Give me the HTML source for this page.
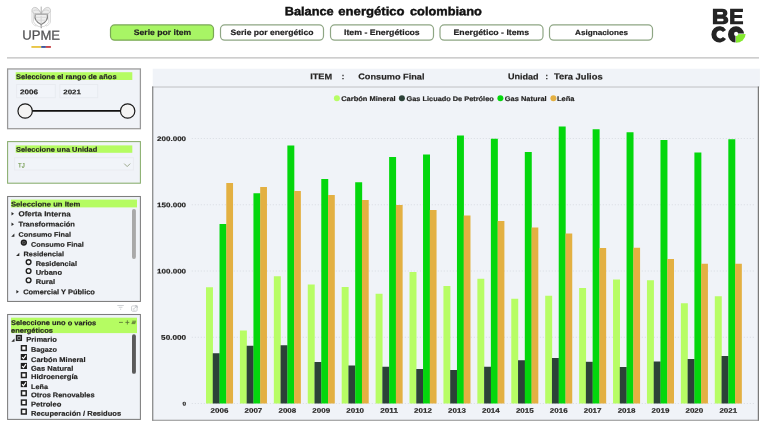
<!DOCTYPE html>
<html><head><meta charset="utf-8"><title>Balance energético colombiano</title>
<style>
html,body{margin:0;padding:0;background:#fff;}
body{width:768px;height:428px;position:relative;overflow:hidden;font-family:"Liberation Sans",sans-serif;}
.t{position:absolute;left:0;top:0;white-space:pre;transform-origin:0 0;-webkit-text-stroke:0.18px currentColor;font-family:"Liberation Sans",sans-serif;}
.box{position:absolute;box-sizing:border-box;}
.btn{position:absolute;top:24.4px;height:16.3px;box-sizing:border-box;border:1px solid #8aa67a;border-radius:4.5px;background:#fff;}
.btn.on{background:#a8f565;border-color:#7aa855;}
.hl{fill:#b5fc62;}
.ttl{-webkit-text-stroke:0.42px #111;}
.tj{-webkit-text-stroke:0.15px #6d9646;}
.upme{-webkit-text-stroke:0.25px #4e4e50;}
#txt{position:absolute;left:0;top:0;width:768px;height:428px;will-change:transform;}
svg{position:absolute;left:0;top:0;}
</style></head><body>
<svg width="768" height="428" viewBox="0 0 768 428">
<!-- header rule + buttons -->
<rect x="7" y="57.1" width="752" height="1.5" fill="#c9c9c9"/>
<rect x="110.5" y="24.9" width="103" height="15.3" rx="4.2" fill="#a8f565" stroke="#7aa855" stroke-width="1.2"/><rect x="220.5" y="24.9" width="103" height="15.3" rx="4.2" fill="#fff" stroke="#8ea684" stroke-width="1.2"/><rect x="330.5" y="24.9" width="103" height="15.3" rx="4.2" fill="#fff" stroke="#8ea684" stroke-width="1.2"/><rect x="440.0" y="24.9" width="103.0" height="15.3" rx="4.2" fill="#fff" stroke="#8ea684" stroke-width="1.2"/><rect x="549.5" y="24.9" width="103" height="15.3" rx="4.2" fill="#fff" stroke="#8ea684" stroke-width="1.2"/>
<!-- left panels -->
<rect x="7.6" y="68.95" width="132.8" height="59.749999999999986" fill="#f0f3f8" stroke="#999" stroke-width="1.25"/>
<rect class="hl" x="15.7" y="72.2" width="116.6" height="7.8"/>
<rect x="16.6" y="84.5" width="38.7" height="13.2" fill="#f1f4f9" stroke="#e8ebf0" stroke-width="1"/>
<rect x="59.8" y="84.5" width="37.9" height="13.2" fill="#f1f4f9" stroke="#e8ebf0" stroke-width="1"/>
<rect x="7.6" y="141.6" width="132.8" height="41.599999999999994" fill="#f0f3f8" stroke="#88ad6c" stroke-width="1.05"/>
<rect class="hl" x="15.7" y="145.4" width="116.6" height="7.4"/>
<rect x="14.6" y="157.7" width="118.8" height="12.3" fill="#f1f4f9" stroke="#e9ecf0" stroke-width="1"/>
<rect x="7.6" y="196.5" width="132.8" height="104.94999999999999" fill="#f0f3f8" stroke="#7d7d7d" stroke-width="1.05"/>
<rect class="hl" x="11" y="199.6" width="126" height="7.8"/>
<rect x="132" y="208.9" width="3.9" height="50" rx="1.9" fill="#a9a9a9"/>
<rect x="7.6" y="314.5" width="132.8" height="104.89999999999998" fill="#f0f3f8" stroke="#7d7d7d" stroke-width="1.05"/>
<rect class="hl" x="11" y="317.7" width="126" height="15.4"/>
<rect x="132" y="334.3" width="3.9" height="39.5" rx="1.9" fill="#5a5a5a"/>
<!-- chart -->
<rect x="152.7" y="68.7" width="607.2" height="18" fill="#f0f3f8"/>
<rect x="152.7" y="86.9" width="605.7" height="333.3" fill="#f0f3f8"/>
<line x1="152" x2="759.2" y1="87" y2="87" stroke="#cfd1d4" stroke-width="1.3"/>
<line x1="152.75" x2="152.75" y1="86.4" y2="420.75" stroke="#777" stroke-width="1.1"/>
<line x1="758.35" x2="758.35" y1="86.4" y2="420.75" stroke="#6a6a6a" stroke-width="1.1"/>
<line x1="152.2" x2="758.9" y1="420.2" y2="420.2" stroke="#8e8e8e" stroke-width="1.15"/>
<line x1="191.8" x2="754" y1="403.50" y2="403.50" stroke="#d8dce2" stroke-width="1" stroke-dasharray="1 2"/><line x1="191.8" x2="754" y1="337.25" y2="337.25" stroke="#d8dce2" stroke-width="1" stroke-dasharray="1 2"/><line x1="191.8" x2="754" y1="271.00" y2="271.00" stroke="#d8dce2" stroke-width="1" stroke-dasharray="1 2"/><line x1="191.8" x2="754" y1="204.75" y2="204.75" stroke="#d8dce2" stroke-width="1" stroke-dasharray="1 2"/><line x1="191.8" x2="754" y1="138.50" y2="138.50" stroke="#d8dce2" stroke-width="1" stroke-dasharray="1 2"/>
<rect x="206.00" y="287.25" width="6.96" height="116.25" fill="#b7fd65"/><rect x="212.76" y="353.25" width="6.96" height="50.25" fill="#2c4238"/><rect x="219.52" y="224.00" width="6.96" height="179.50" fill="#04d70d"/><rect x="226.28" y="183.00" width="6.76" height="220.50" fill="#e3b042"/><rect x="239.92" y="330.50" width="6.96" height="73.00" fill="#b7fd65"/><rect x="246.68" y="345.75" width="6.96" height="57.75" fill="#2c4238"/><rect x="253.44" y="193.25" width="6.96" height="210.25" fill="#04d70d"/><rect x="260.20" y="187.00" width="6.76" height="216.50" fill="#e3b042"/><rect x="273.84" y="276.25" width="6.96" height="127.25" fill="#b7fd65"/><rect x="280.60" y="345.25" width="6.96" height="58.25" fill="#2c4238"/><rect x="287.36" y="145.50" width="6.96" height="258.00" fill="#04d70d"/><rect x="294.12" y="191.00" width="6.76" height="212.50" fill="#e3b042"/><rect x="307.76" y="284.50" width="6.96" height="119.00" fill="#b7fd65"/><rect x="314.52" y="362.00" width="6.96" height="41.50" fill="#2c4238"/><rect x="321.28" y="179.00" width="6.96" height="224.50" fill="#04d70d"/><rect x="328.04" y="195.00" width="6.76" height="208.50" fill="#e3b042"/><rect x="341.68" y="287.00" width="6.96" height="116.50" fill="#b7fd65"/><rect x="348.44" y="365.50" width="6.96" height="38.00" fill="#2c4238"/><rect x="355.20" y="182.25" width="6.96" height="221.25" fill="#04d70d"/><rect x="361.96" y="200.00" width="6.76" height="203.50" fill="#e3b042"/><rect x="375.60" y="293.75" width="6.96" height="109.75" fill="#b7fd65"/><rect x="382.36" y="366.75" width="6.96" height="36.75" fill="#2c4238"/><rect x="389.12" y="157.00" width="6.96" height="246.50" fill="#04d70d"/><rect x="395.88" y="205.00" width="6.76" height="198.50" fill="#e3b042"/><rect x="409.52" y="272.00" width="6.96" height="131.50" fill="#b7fd65"/><rect x="416.28" y="369.00" width="6.96" height="34.50" fill="#2c4238"/><rect x="423.04" y="154.50" width="6.96" height="249.00" fill="#04d70d"/><rect x="429.80" y="210.00" width="6.76" height="193.50" fill="#e3b042"/><rect x="443.44" y="286.00" width="6.96" height="117.50" fill="#b7fd65"/><rect x="450.20" y="370.00" width="6.96" height="33.50" fill="#2c4238"/><rect x="456.96" y="135.50" width="6.96" height="268.00" fill="#04d70d"/><rect x="463.72" y="215.50" width="6.76" height="188.00" fill="#e3b042"/><rect x="477.36" y="278.75" width="6.96" height="124.75" fill="#b7fd65"/><rect x="484.12" y="366.75" width="6.96" height="36.75" fill="#2c4238"/><rect x="490.88" y="138.75" width="6.96" height="264.75" fill="#04d70d"/><rect x="497.64" y="221.00" width="6.76" height="182.50" fill="#e3b042"/><rect x="511.28" y="298.75" width="6.96" height="104.75" fill="#b7fd65"/><rect x="518.04" y="360.25" width="6.96" height="43.25" fill="#2c4238"/><rect x="524.80" y="152.00" width="6.96" height="251.50" fill="#04d70d"/><rect x="531.56" y="227.50" width="6.76" height="176.00" fill="#e3b042"/><rect x="545.20" y="295.75" width="6.96" height="107.75" fill="#b7fd65"/><rect x="551.96" y="358.00" width="6.96" height="45.50" fill="#2c4238"/><rect x="558.72" y="126.50" width="6.96" height="277.00" fill="#04d70d"/><rect x="565.48" y="233.50" width="6.76" height="170.00" fill="#e3b042"/><rect x="579.12" y="288.00" width="6.96" height="115.50" fill="#b7fd65"/><rect x="585.88" y="361.80" width="6.96" height="41.70" fill="#2c4238"/><rect x="592.64" y="129.25" width="6.96" height="274.25" fill="#04d70d"/><rect x="599.40" y="248.00" width="6.76" height="155.50" fill="#e3b042"/><rect x="613.04" y="279.50" width="6.96" height="124.00" fill="#b7fd65"/><rect x="619.80" y="367.00" width="6.96" height="36.50" fill="#2c4238"/><rect x="626.56" y="132.25" width="6.96" height="271.25" fill="#04d70d"/><rect x="633.32" y="247.75" width="6.76" height="155.75" fill="#e3b042"/><rect x="646.96" y="280.25" width="6.96" height="123.25" fill="#b7fd65"/><rect x="653.72" y="361.50" width="6.96" height="42.00" fill="#2c4238"/><rect x="660.48" y="140.00" width="6.96" height="263.50" fill="#04d70d"/><rect x="667.24" y="259.00" width="6.76" height="144.50" fill="#e3b042"/><rect x="680.88" y="303.25" width="6.96" height="100.25" fill="#b7fd65"/><rect x="687.64" y="359.00" width="6.96" height="44.50" fill="#2c4238"/><rect x="694.40" y="152.50" width="6.96" height="251.00" fill="#04d70d"/><rect x="701.16" y="263.75" width="6.76" height="139.75" fill="#e3b042"/><rect x="714.80" y="296.25" width="6.96" height="107.25" fill="#b7fd65"/><rect x="721.56" y="356.00" width="6.96" height="47.50" fill="#2c4238"/><rect x="728.32" y="139.25" width="6.96" height="264.25" fill="#04d70d"/><rect x="735.08" y="263.75" width="6.76" height="139.75" fill="#e3b042"/>
<circle cx="336.9" cy="98.3" r="3" fill="#b7fd65"/><circle cx="401.9" cy="98.3" r="3" fill="#2c4238"/><circle cx="500.4" cy="98.3" r="3" fill="#04d70d"/><circle cx="553.4" cy="98.3" r="3" fill="#e3b042"/>
<path d="M11.5 211.90 L14.0 213.7 L11.5 215.50Z" fill="#2a2a2a"/><path d="M11.5 222.40 L14.0 224.2 L11.5 226.00Z" fill="#2a2a2a"/><path d="M14.399999999999999 233.60 L14.399999999999999 236.8 L11.2 236.8Z" fill="#2a2a2a"/><circle cx="23.85" cy="242.6" r="2.4" fill="#9a9a9a" stroke="#1e1e1e" stroke-width="1.5"/><circle cx="23.85" cy="242.6" r="1.35" fill="#333"/><path d="M19.3 252.70 L19.3 255.9 L16.1 255.9Z" fill="#2a2a2a"/><circle cx="28.6" cy="262.1" r="2.4" fill="#f6f6f6" stroke="#1e1e1e" stroke-width="1.35"/><circle cx="28.6" cy="271" r="2.4" fill="#f6f6f6" stroke="#1e1e1e" stroke-width="1.35"/><circle cx="28.6" cy="280.2" r="2.4" fill="#f6f6f6" stroke="#1e1e1e" stroke-width="1.35"/><path d="M16.4 289.90 L18.9 291.7 L16.4 293.50Z" fill="#2a2a2a"/><path d="M14.5 338.60 L14.5 341.8 L11.3 341.8Z" fill="#2a2a2a"/><rect x="16.60" y="335.60" width="4.7" height="4.7" fill="#d3d5d8" stroke="#222" stroke-width="1.5"/><rect x="17.70" y="337.30" width="2.6" height="1.5" fill="#111"/><rect x="21.50" y="345.75" width="4.7" height="4.7" fill="#fbfbfb" stroke="#222" stroke-width="1.5"/><rect x="20.75" y="354.00" width="6.2" height="6.1" fill="#1c1c1c"/><path d="M22.05 357.20 L23.45 358.70 L25.95 355.30" fill="none" stroke="#fff" stroke-width="1.15"/><rect x="20.75" y="362.90" width="6.2" height="6.1" fill="#1c1c1c"/><path d="M22.05 366.10 L23.45 367.60 L25.95 364.20" fill="none" stroke="#fff" stroke-width="1.15"/><rect x="21.50" y="372.80" width="4.7" height="4.7" fill="#fbfbfb" stroke="#222" stroke-width="1.5"/><rect x="20.75" y="381.05" width="6.2" height="6.1" fill="#1c1c1c"/><path d="M22.05 384.25 L23.45 385.75 L25.95 382.35" fill="none" stroke="#fff" stroke-width="1.15"/><rect x="21.50" y="390.85" width="4.7" height="4.7" fill="#fbfbfb" stroke="#222" stroke-width="1.5"/><rect x="21.50" y="400.10" width="4.7" height="4.7" fill="#fbfbfb" stroke="#222" stroke-width="1.5"/><rect x="21.50" y="409.30" width="4.7" height="4.7" fill="#fbfbfb" stroke="#222" stroke-width="1.5"/><line x1="25" x2="127.6" y1="110.8" y2="110.8" stroke="#111" stroke-width="1.8"/><circle cx="25.15" cy="111" r="7.2" fill="#f4f4f4" stroke="#1a1a1a" stroke-width="1.2"/><circle cx="127.65" cy="111" r="7.2" fill="#f4f4f4" stroke="#1a1a1a" stroke-width="1.2"/><path d="M124.2 163.6 L127.2 166.6 L130.2 163.6" fill="none" stroke="#98a487" stroke-width="0.95"/><g stroke="#c3c6ca" stroke-width="0.8" fill="none"><path d="M117.300 305.500h6.500M118.800 307.300h3.600M120 309.200h1.200"/><rect x="131.500" y="305.900" width="5.600" height="5.400" rx="1.200"/><path d="M134 308.800l2.600-2.600M135 305.800h2.200v2.200" stroke="#b4b7bc"/><path d="M133.300 308.200v2h2.200" stroke="#d0d3d7"/></g><g stroke="#5b7636" stroke-width="0.85" fill="none"><path d="M119 322.4h3.900M125.400 322.400h3.900M127.350 320.300v4.200"/><path d="M132.300 321.200h3.800M131.900 322.400h3.800M131.500 323.600h3.800" stroke-width="0.9"/></g>
<!-- UPME crest -->
<defs><filter id="sb" x="-20%" y="-20%" width="140%" height="140%"><feGaussianBlur stdDeviation="0.4"/></filter></defs>
<g filter="url(#sb)" fill="none" stroke-linecap="round">
<path d="M32 11.500V22C32.600 24 34 25.400 36 26M50.400 11.500V22C49.800 24 48.400 25.400 46.400 26" stroke="#d9d9d9" stroke-width="1"/>
<path d="M33.600 12.500V21.500C34.200 23.400 35.400 24.600 37 25.400M48.800 12.500V21.500C48.200 23.400 47 24.600 45.400 25.400" stroke="#cfcfcf" stroke-width="0.8"/>
<path d="M40.900 13.600C39.600 8.600 35 5.800 32.600 8.400C31.200 10.200 32 12.600 34.400 13.600C36.500 14.300 39.400 14.100 40.900 13.600zM41.500 13.600C42.800 8.600 47.400 5.800 49.800 8.400C51.200 10.200 50.400 12.600 48 13.600C45.900 14.300 43 14.100 41.500 13.600z" fill="#ececec" stroke="#bdbdbd" stroke-width="0.8"/>
<path d="M33.600 10.800c2.200-1.600 5-1 6.800 1.400M48.800 10.800c-2.200-1.600-5-1-6.800 1.400" stroke="#c9c9c9" stroke-width="0.7"/>
<path d="M35.200 14.400C34.300 18 35.300 21.800 41.200 24.600C47.100 21.800 48.100 18 47.200 14.400Z" fill="#efefef" stroke="#868686" stroke-width="1.15"/>
<path d="M35.400 14.300H47" stroke="#bdbdbd" stroke-width="1"/>
<path d="M36 17.300H46.400M36.800 20.200H45.600" stroke="#d0d0d0" stroke-width="0.7"/>
<path d="M41.200 16.500V22.500" stroke="#dadada" stroke-width="1.4"/>
<path d="M41.200 7V13.800" stroke="#adadad" stroke-width="1"/>
<path d="M41.200 24.600V27.700" stroke="#959595" stroke-width="1.2"/>
<path d="M37 25.600C38.400 26.800 40 27 41.200 26.200M45.400 25.600C44 26.800 42.400 27 41.200 26.200" stroke="#c9c9c9" stroke-width="0.7"/>
</g>
<rect x="31.4" y="46" width="9.8" height="1.9" fill="#e9c646"/><rect x="41.2" y="46" width="4.7" height="1.9" fill="#3f5a9c"/><rect x="45.9" y="46" width="5" height="1.9" fill="#c8474c"/>
<!-- BECO -->
<g fill="#242424">
<path fill-rule="evenodd" d="M712.900 8.850h9.200c3.300 0 5.300 1.600 5.300 4.100c0 1.500-0.700 2.600-2 3.300c1.800 0.600 2.900 2 2.900 3.900c0 2.700-2.200 4.100-5.800 4.100h-9.600zM717.200 12v2.600h4.200c1.100 0 1.700-0.500 1.700-1.300c0-0.800-0.600-1.300-1.700-1.300zM717.200 18.700v2.600h4.600c1.200 0 1.800-0.500 1.800-1.300c0-0.800-0.600-1.300-1.800-1.300z"/>
<path d="M730.100 8.850h12.850v3.100h-8.500v2.950h7.650v3.100h-7.650v3.150h8.600v3.100h-12.950z"/>
<path d="M726.03 29.89 A8.0 8.15 0 1 0 726.03 39.01 L722.93 36.99 A3.7 3.95 0 1 1 722.93 31.91 Z"/>
<path d="M736.100 26.300A8.050 8.150 0 0 1 744.100 33.600L735.500 33.600L735.500 42.580A8.050 8.150 0 0 1 736.100 26.300z"/>
</g>
<path d="M736 34.250L745.600 33.950A9.650 8.800 0 0 1 736 42.750z" fill="#84e92f"/>
<circle cx="736.100" cy="33.900" r="2.050" fill="#fff"/>
</svg>
<div id="txt"><span class="t ttl" style="font-size:11.90px;line-height:11.90px;color:#111;font-weight:700;transform:translate(284.70px,6.22px) scaleX(1.074) rotate(0.03deg)">Balance</span><span class="t ttl" style="font-size:11.90px;line-height:11.90px;color:#111;font-weight:700;transform:translate(338.30px,6.22px) scaleX(1.103) rotate(0.03deg)">energético</span><span class="t ttl" style="font-size:11.90px;line-height:11.90px;color:#111;font-weight:700;transform:translate(410.00px,6.22px) scaleX(1.077) rotate(0.03deg)">colombiano</span><span class="t upme" style="font-size:13.12px;line-height:13.12px;color:#525254;font-weight:400;transform:translate(22.20px,28.62px) scaleX(1.000) rotate(0.03deg)">UPME</span><span class="t " style="font-size:7.84px;line-height:7.84px;color:#222;font-weight:700;transform:translate(133.80px,29.07px) scaleX(1.100) rotate(0.03deg)">Serie por item</span><span class="t " style="font-size:7.80px;line-height:7.80px;color:#222;font-weight:700;transform:translate(230.50px,29.07px) scaleX(1.100) rotate(0.03deg)">Serie por energético</span><span class="t " style="font-size:7.94px;line-height:7.94px;color:#222;font-weight:700;transform:translate(344.00px,29.07px) scaleX(1.100) rotate(0.03deg)">Item - Energéticos</span><span class="t " style="font-size:7.94px;line-height:7.94px;color:#222;font-weight:700;transform:translate(453.50px,29.07px) scaleX(1.100) rotate(0.03deg)">Energético - Items</span><span class="t " style="font-size:7.41px;line-height:7.41px;color:#222;font-weight:700;transform:translate(575.00px,29.07px) scaleX(1.100) rotate(0.03deg)">Asignaciones</span><span class="t " style="font-size:8.37px;line-height:8.37px;color:#252423;font-weight:700;transform:translate(310.20px,72.37px) scaleX(1.100) rotate(0.03deg)">ITEM</span><span class="t " style="font-size:8.36px;line-height:8.36px;color:#252423;font-weight:700;transform:translate(358.20px,72.37px) scaleX(1.100) rotate(0.03deg)">Consumo Final</span><span class="t " style="font-size:8.26px;line-height:8.26px;color:#252423;font-weight:700;transform:translate(507.90px,73.37px) scaleX(1.100) rotate(0.03deg)">Unidad</span><span class="t " style="font-size:8.52px;line-height:8.52px;color:#252423;font-weight:700;transform:translate(553.90px,72.37px) scaleX(1.100) rotate(0.03deg)">Tera Julios</span><span class="t " style="font-size:8.60px;line-height:8.60px;color:#252423;font-weight:700;transform:translate(341.70px,72.37px) scaleX(0.873) rotate(0.03deg)">:</span><span class="t " style="font-size:8.60px;line-height:8.60px;color:#252423;font-weight:700;transform:translate(545.50px,72.37px) scaleX(0.873) rotate(0.03deg)">:</span><span class="t " style="font-size:6.81px;line-height:6.81px;color:#252423;font-weight:700;transform:translate(341.20px,96.01px) scaleX(1.100) rotate(0.03deg)">Carbón Mineral</span><span class="t " style="font-size:6.71px;line-height:6.71px;color:#252423;font-weight:700;transform:translate(406.50px,95.98px) scaleX(1.100) rotate(0.03deg)">Gas Licuado De Petróleo</span><span class="t " style="font-size:6.79px;line-height:6.79px;color:#252423;font-weight:700;transform:translate(504.80px,96.00px) scaleX(1.100) rotate(0.03deg)">Gas Natural</span><span class="t " style="font-size:6.86px;line-height:6.86px;color:#252423;font-weight:700;transform:translate(556.90px,96.03px) scaleX(1.100) rotate(0.03deg)">Leña</span><span class="t " style="font-size:5.35px;line-height:5.35px;color:#252423;font-weight:700;transform:translate(182.50px,401.46px) scaleX(1.210) rotate(0.03deg)">0</span><span class="t " style="font-size:6.76px;line-height:6.76px;color:#252423;font-weight:700;transform:translate(161.10px,334.69px) scaleX(1.210) rotate(0.03deg)">50.000</span><span class="t " style="font-size:6.63px;line-height:6.63px;color:#252423;font-weight:700;transform:translate(157.10px,268.40px) scaleX(1.210) rotate(0.03deg)">100.000</span><span class="t " style="font-size:6.63px;line-height:6.63px;color:#252423;font-weight:700;transform:translate(157.10px,202.15px) scaleX(1.210) rotate(0.03deg)">150.000</span><span class="t " style="font-size:6.63px;line-height:6.63px;color:#252423;font-weight:700;transform:translate(157.10px,135.90px) scaleX(1.210) rotate(0.03deg)">200.000</span><span class="t " style="font-size:6.61px;line-height:6.61px;color:#252423;font-weight:700;transform:translate(210.60px,407.69px) scaleX(1.210) rotate(0.03deg)">2006</span><span class="t " style="font-size:6.61px;line-height:6.61px;color:#252423;font-weight:700;transform:translate(244.52px,407.69px) scaleX(1.210) rotate(0.03deg)">2007</span><span class="t " style="font-size:6.61px;line-height:6.61px;color:#252423;font-weight:700;transform:translate(278.44px,407.69px) scaleX(1.210) rotate(0.03deg)">2008</span><span class="t " style="font-size:6.61px;line-height:6.61px;color:#252423;font-weight:700;transform:translate(312.36px,407.69px) scaleX(1.210) rotate(0.03deg)">2009</span><span class="t " style="font-size:6.61px;line-height:6.61px;color:#252423;font-weight:700;transform:translate(346.28px,407.69px) scaleX(1.210) rotate(0.03deg)">2010</span><span class="t " style="font-size:6.78px;line-height:6.78px;color:#252423;font-weight:700;transform:translate(380.20px,407.75px) scaleX(1.210) rotate(0.03deg)">2011</span><span class="t " style="font-size:6.61px;line-height:6.61px;color:#252423;font-weight:700;transform:translate(414.12px,407.69px) scaleX(1.210) rotate(0.03deg)">2012</span><span class="t " style="font-size:6.61px;line-height:6.61px;color:#252423;font-weight:700;transform:translate(448.04px,407.69px) scaleX(1.210) rotate(0.03deg)">2013</span><span class="t " style="font-size:6.61px;line-height:6.61px;color:#252423;font-weight:700;transform:translate(481.96px,407.69px) scaleX(1.210) rotate(0.03deg)">2014</span><span class="t " style="font-size:6.61px;line-height:6.61px;color:#252423;font-weight:700;transform:translate(515.88px,407.69px) scaleX(1.210) rotate(0.03deg)">2015</span><span class="t " style="font-size:6.61px;line-height:6.61px;color:#252423;font-weight:700;transform:translate(549.80px,407.69px) scaleX(1.210) rotate(0.03deg)">2016</span><span class="t " style="font-size:6.61px;line-height:6.61px;color:#252423;font-weight:700;transform:translate(583.72px,407.69px) scaleX(1.210) rotate(0.03deg)">2017</span><span class="t " style="font-size:6.61px;line-height:6.61px;color:#252423;font-weight:700;transform:translate(617.64px,407.69px) scaleX(1.210) rotate(0.03deg)">2018</span><span class="t " style="font-size:6.61px;line-height:6.61px;color:#252423;font-weight:700;transform:translate(651.56px,407.69px) scaleX(1.210) rotate(0.03deg)">2019</span><span class="t " style="font-size:6.61px;line-height:6.61px;color:#252423;font-weight:700;transform:translate(685.48px,407.69px) scaleX(1.210) rotate(0.03deg)">2020</span><span class="t " style="font-size:6.61px;line-height:6.61px;color:#252423;font-weight:700;transform:translate(719.40px,407.69px) scaleX(1.210) rotate(0.03deg)">2021</span><span class="t " style="font-size:6.80px;line-height:6.80px;color:#252423;font-weight:700;transform:translate(16.00px,73.91px) scaleX(1.100) rotate(0.03deg)">Seleccione el rango de años</span><span class="t " style="font-size:6.69px;line-height:6.69px;color:#2a2a2a;font-weight:700;transform:translate(20.00px,89.32px) scaleX(1.210) rotate(0.03deg)">2006</span><span class="t " style="font-size:6.61px;line-height:6.61px;color:#2a2a2a;font-weight:700;transform:translate(63.20px,89.29px) scaleX(1.210) rotate(0.03deg)">2021</span><span class="t " style="font-size:6.76px;line-height:6.76px;color:#252423;font-weight:700;transform:translate(16.00px,146.70px) scaleX(1.100) rotate(0.03deg)">Seleccione una Unidad</span><span class="t tj" style="font-size:6.50px;line-height:6.50px;color:#6d9646;font-weight:400;transform:translate(18.00px,162.56px) scaleX(0.928) rotate(0.03deg)">TJ</span><span class="t " style="font-size:6.97px;line-height:6.97px;color:#252423;font-weight:700;transform:translate(11.00px,201.47px) scaleX(1.100) rotate(0.03deg)">Seleccione un Item</span><span class="t " style="font-size:7.24px;line-height:7.24px;color:#252423;font-weight:700;transform:translate(18.50px,210.36px) scaleX(1.100) rotate(0.03deg)">Oferta Interna</span><span class="t " style="font-size:6.85px;line-height:6.85px;color:#252423;font-weight:700;transform:translate(18.50px,221.43px) scaleX(1.100) rotate(0.03deg)">Transformación</span><span class="t " style="font-size:6.61px;line-height:6.61px;color:#252423;font-weight:700;transform:translate(18.50px,231.74px) scaleX(1.100) rotate(0.03deg)">Consumo Final</span><span class="t " style="font-size:6.67px;line-height:6.67px;color:#252423;font-weight:700;transform:translate(31.00px,241.76px) scaleX(1.100) rotate(0.03deg)">Consumo Final</span><span class="t " style="font-size:6.61px;line-height:6.61px;color:#252423;font-weight:700;transform:translate(23.60px,251.14px) scaleX(1.100) rotate(0.03deg)">Residencial</span><span class="t " style="font-size:6.76px;line-height:6.76px;color:#252423;font-weight:700;transform:translate(35.70px,260.99px) scaleX(1.100) rotate(0.03deg)">Residencial</span><span class="t " style="font-size:6.83px;line-height:6.83px;color:#252423;font-weight:700;transform:translate(35.70px,269.82px) scaleX(1.100) rotate(0.03deg)">Urbano</span><span class="t " style="font-size:6.86px;line-height:6.86px;color:#252423;font-weight:700;transform:translate(35.70px,279.03px) scaleX(1.100) rotate(0.03deg)">Rural</span><span class="t " style="font-size:6.78px;line-height:6.78px;color:#252423;font-weight:700;transform:translate(23.20px,289.20px) scaleX(1.100) rotate(0.03deg)">Comercial Y Público</span><span class="t " style="font-size:6.77px;line-height:6.77px;color:#252423;font-weight:700;transform:translate(11.00px,320.10px) scaleX(1.100) rotate(0.03deg)">Seleccione uno o varios</span><span class="t " style="font-size:6.80px;line-height:6.80px;color:#252423;font-weight:700;transform:translate(11.00px,327.71px) scaleX(1.100) rotate(0.03deg)">energéticos</span><span class="t " style="font-size:6.88px;line-height:6.88px;color:#252423;font-weight:700;transform:translate(26.30px,336.84px) scaleX(1.100) rotate(0.03deg)">Primario</span><span class="t " style="font-size:6.65px;line-height:6.65px;color:#252423;font-weight:700;transform:translate(31.00px,346.66px) scaleX(1.100) rotate(0.03deg)">Bagazo</span><span class="t " style="font-size:6.82px;line-height:6.82px;color:#252423;font-weight:700;transform:translate(31.00px,357.02px) scaleX(1.100) rotate(0.03deg)">Carbón Mineral</span><span class="t " style="font-size:6.87px;line-height:6.87px;color:#252423;font-weight:700;transform:translate(31.00px,365.83px) scaleX(1.100) rotate(0.03deg)">Gas Natural</span><span class="t " style="font-size:6.90px;line-height:6.90px;color:#252423;font-weight:700;transform:translate(31.00px,373.94px) scaleX(1.100) rotate(0.03deg)">Hidroenergía</span><span class="t " style="font-size:6.62px;line-height:6.62px;color:#252423;font-weight:700;transform:translate(31.00px,384.05px) scaleX(1.100) rotate(0.03deg)">Leña</span><span class="t " style="font-size:6.76px;line-height:6.76px;color:#252423;font-weight:700;transform:translate(31.00px,392.29px) scaleX(1.100) rotate(0.03deg)">Otros Renovables</span><span class="t " style="font-size:6.88px;line-height:6.88px;color:#252423;font-weight:700;transform:translate(31.00px,401.54px) scaleX(1.100) rotate(0.03deg)">Petroleo</span><span class="t " style="font-size:6.87px;line-height:6.87px;color:#252423;font-weight:700;transform:translate(31.00px,410.73px) scaleX(1.100) rotate(0.03deg)">Recuperación / Residuos</span></div>
</body></html>
